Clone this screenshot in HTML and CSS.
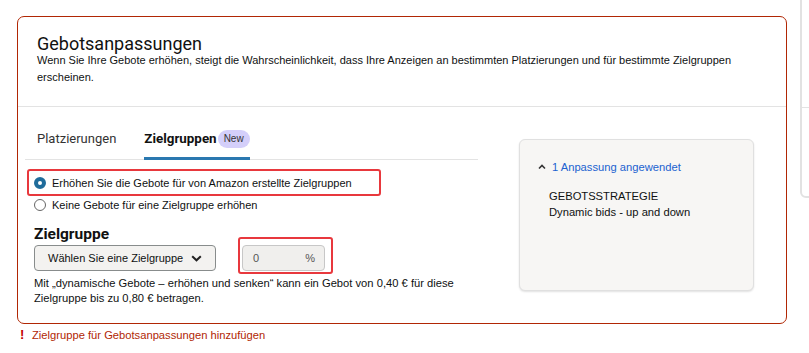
FILE: index.html
```html
<!DOCTYPE html>
<html lang="de">
<head>
    <meta charset="UTF-8">
    <meta name="viewport" content="width=device-width, initial-scale=1.0">
    <title>Gebotsanpassungen</title>
    <link rel="stylesheet" href="styles.css">
</head>
<body>
    <div class="page">
        <div class="row">
            <div class="card">
                <div class="card-head">
                    <h2 class="title">Gebotsanpassungen</h2>
                    <p class="subtitle">Wenn Sie Ihre Gebote erhöhen, steigt die Wahrscheinlichkeit, dass Ihre Anzeigen an bestimmten Platzierungen und für bestimmte Zielgruppen erscheinen.</p>
                </div>
                <div class="card-body">
                    <div class="main">
                        <div class="tabs">
                            <div class="tab">Platzierungen</div>
                            <div class="tab active">Zielgruppen<span class="badge">New</span></div>
                        </div>
                        <div class="radio-mark">
                            <label class="radio-row">
                                <span class="radio checked"></span>
                                Erhöhen Sie die Gebote für von Amazon erstellte Zielgruppen
                            </label>
                        </div>
                        <label class="radio-row plain">
                            <span class="radio"></span>
                            Keine Gebote für eine Zielgruppe erhöhen
                        </label>
                        <h3 class="section">Zielgruppe</h3>
                        <div class="controls">
                            <button class="select">
                                Wählen Sie eine Zielgruppe
                                <svg width="11" height="7" viewBox="0 0 11 7"><polyline points="1.2,1.2 5.5,5.3 9.8,1.2" fill="none" stroke="#222" stroke-width="2"/></svg>
                            </button>
                            <div class="input-mark">
                                <div class="percent">
                                    <span>0</span>
                                    <span>%</span>
                                </div>
                            </div>
                        </div>
                        <p class="help">Mit „dynamische Gebote – erhöhen und senken“ kann ein Gebot von 0,40 € für diese Zielgruppe bis zu 0,80 € betragen.</p>
                    </div>
                    <div class="summary">
                        <div class="summary-link">
                            <svg width="8" height="6" viewBox="0 0 8 6"><polyline points="1,4.5 4,1.5 7,4.5" fill="none" stroke="#333" stroke-width="1.6"/></svg>
                            <span>1 Anpassung angewendet</span>
                        </div>
                        <div class="summary-body">
                            <div>GEBOTSSTRATEGIE</div>
                            <div>Dynamic bids - up and down</div>
                        </div>
                    </div>
                </div>
            </div>
            <div class="side">
                <div class="side-head"></div>
            </div>
        </div>
        <div class="error"><span class="bang">!</span>Zielgruppe für Gebotsanpassungen hinzufügen</div>
    </div>
</body>
</html>
```

FILE: styles.css
```css
body {
    margin: 0;
    background-color: #fff;
    color: #111;
    font-family: "Liberation Sans", Arial, sans-serif;
    font-size: 11px;
    overflow: hidden;
}
.page {
    padding: 16px 0 0 17px;
}
.row {
    display: flex;
    align-items: flex-start;
}
.card {
    flex: none;
    width: 770px;
    box-sizing: border-box;
    border: 1px solid #b12704;
    border-radius: 7px;
}
.card-head {
    padding: 18px 20px 20px 19px;
    border-bottom: 1px solid #e3e3e3;
}
.title {
    margin: 0;
    font-family: Roboto, "Liberation Sans", sans-serif;
    font-size: 18px;
    font-weight: 400;
    line-height: 17px;
    color: #111;
}
.subtitle {
    margin: 0;
    line-height: 17px;
    color: #0f1111;
}
.card-body {
    display: flex;
    padding: 0 32px 17px 7px;
    gap: 41px;
}
.main {
    width: 453px;
    flex: none;
}
.tabs {
    display: flex;
    gap: 28px;
    padding-left: 12px;
    border-bottom: 1px solid #e3e3e3;
}
.tab {
    display: flex;
    align-items: center;
    padding: 23px 0 9px;
    line-height: 18px;
    font-family: Roboto, "Liberation Sans", sans-serif;
    font-size: 13px;
    color: #333;
    border-bottom: 3px solid transparent;
    margin-bottom: -1px;
}
.tab.active {
    font-weight: 700;
    font-size: 13.4px;
    color: #111;
    border-bottom-color: #2a78b0;
}
.badge {
    display: inline-block;
    margin-left: 1px;
    padding: 0 6px;
    border-radius: 9px;
    background-color: #d4cffa;
    color: #333;
    font-family: "Liberation Sans", Arial, sans-serif;
    font-size: 10px;
    font-weight: 400;
    line-height: 18px;
}
.radio-mark {
    margin: 9px 0 0 2px;
    width: 354px;
    box-sizing: border-box;
    border: 2px solid #e8383d;
    border-radius: 3px;
    padding: 3px 0 0 5px;
    height: 27px;
}
.radio-row {
    display: flex;
    align-items: center;
    gap: 6px;
    line-height: 18px;
    color: #0f1111;
}
.radio-row.plain {
    padding-left: 9px;
}
.radio {
    width: 12px;
    height: 12px;
    box-sizing: border-box;
    border-radius: 50%;
    border: 1px solid #666;
    background-color: #fff;
}
.radio.checked {
    border: 4px solid #1f6c9b;
}
.section {
    margin: 10px 0 0 9px;
    font-family: Roboto, "Liberation Sans", sans-serif;
    font-size: 15.5px;
    font-weight: 700;
    line-height: 20px;
    color: #111;
}
.controls {
    display: flex;
    align-items: flex-start;
    margin: 1px 0 0 9px;
    height: 29px;
}
.select {
    display: flex;
    align-items: center;
    justify-content: space-between;
    width: 182px;
    height: 26px;
    box-sizing: border-box;
    padding: 0 13px 0 13px;
    border: 1px solid #888c8c;
    border-radius: 4px;
    background-color: #f3f2f0;
    font-family: "Liberation Sans", Arial, sans-serif;
    font-size: 11px;
    color: #0f1111;
}
.input-mark {
    margin: -8px 0 0 22px;
    border: 2px solid #e8383d;
    border-radius: 3px;
    padding: 6px 6px 1px 2px;
}
.percent {
    display: flex;
    justify-content: space-between;
    align-items: center;
    width: 83px;
    height: 26px;
    box-sizing: border-box;
    padding: 0 9px 0 10px;
    border: 1px solid #c7c7c7;
    border-radius: 4px;
    background-color: #f0efed;
    color: #555;
}
.help {
    margin: 2px 0 0 9px;
    font-size: 11.2px;
    line-height: 15px;
    color: #0f1111;
}
.summary {
    width: 235px;
    height: 152px;
    flex: none;
    box-sizing: border-box;
    margin-top: 32px;
    padding: 19px 18px;
    background-color: #f7f6f4;
    border: 1px solid #e0e0e0;
    border-radius: 6px;
    box-shadow: 0 1px 2px rgba(0, 0, 0, 0.12);
}
.summary-link {
    display: flex;
    align-items: center;
    gap: 6px;
    line-height: 16px;
    font-size: 11.2px;
    color: #2162d0;
}
.summary-body {
    margin: 13px 0 0 11px;
    font-size: 11.2px;
    line-height: 16px;
    color: #0f1111;
}
.side {
    flex: none;
    width: 40px;
    height: 222px;
    margin: -40px 0 0 13px;
    box-sizing: border-box;
    border: 2px solid #e2e2e2;
    border-radius: 6px;
}
.side-head {
    height: 129px;
    border-bottom: 1px solid #e3e3e3;
}
.error {
    display: flex;
    align-items: center;
    margin: 4px 0 0 3px;
    font-size: 11.2px;
    line-height: 14px;
    color: #b12704;
}
.bang {
    width: 12px;
    font-weight: 700;
    font-size: 13px;
    color: #c40000;
}
```
